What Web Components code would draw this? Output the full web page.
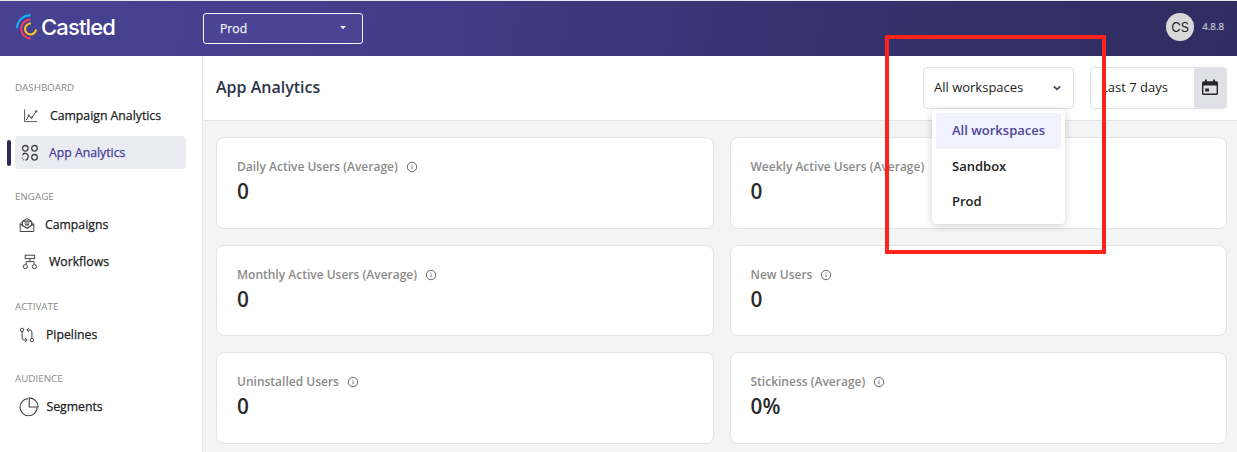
<!DOCTYPE html>
<html lang="en">
<head>
<meta charset="utf-8">
<title>Castled</title>
<style>
html,body{margin:0;height:100%;overflow:hidden}
body{font-family:"Open Sans","Noto Sans",sans-serif;font-size:12px;color:#222;background:#fff}
</style>
</head>
<body>
<castled-app></castled-app>
<script>
const define = (name, html, setup) => {
  const t = document.createElement('template');
  t.innerHTML = html;
  customElements.define(name, class extends HTMLElement {
    connectedCallback() {
      if (this.shadowRoot) return;
      const root = this.attachShadow({mode: 'open'});
      root.append(t.content.cloneNode(true));
      if (setup) setup(this, root);
    }
  });
};

const ICONS = {
  chart: [16, 14, '<path d="M1.6 .5V12.6H14M3.2 11 5.8 6.8 8.6 8.9 13.2 2.2" stroke-width=".9"/><circle cx="5.8" cy="6.6" r=".7"/><circle cx="8.6" cy="8.7" r=".7"/><circle cx="13.2" cy="2.4" r=".8"/>'],
  apps: [18, 18, '<g stroke-width="1.3"><circle cx="4.3" cy="4.3" r="2.8"/><circle cx="13.5" cy="4.3" r="2.8"/><circle cx="13.5" cy="13.3" r="2.8"/><path d="M1.6 11.2A2.9 2.9 0 0 1 7 13.4 2.9 2.9 0 0 1 4.4 16.1M1.5 13.6v.8M2.4 15.6l.5.4"/></g>'],
  mail: [16, 16, '<path d="M3.4 5.2 1.2 7V14.5H14.8V7L12.6 5.2M3.4 8.3V4.3L8 1.6 12.6 4.3V8.3"/><path d="M1.2 7 8 11.3 14.8 7M3.6 4.2H12.4M5.4 6H10.6M6 7.8H10" stroke-width="1.2"/>'],
  flow: [16, 16, '<rect x="3.2" y="1.2" width="9.4" height="3.4"/><path d="M8 4.6V7.6M4.2 10.2V7.6H12V10.2"/><circle cx="3.4" cy="12.6" r="2.1"/><circle cx="12.4" cy="12.6" r="2.1"/>'],
  pipe: [16, 16, '<circle cx="3.1" cy="2.9" r="1.7"/><path d="M3.1 4.6V11Q3.1 13 5 13H8M6 10.8 8.2 13 6 15.2"/><circle cx="12.9" cy="13.1" r="1.7"/><path d="M12.9 11.4V5Q12.9 3 11 3H8M10 .8 7.8 3 10 5.2"/>'],
  pie: [20, 20, '<path d="M8.8 1.6A8.6 8.6 0 1 0 18.2 10.6M10.2 .9V10H19.2A9.1 9.1 0 0 0 10.2 .9Z" stroke-width="1.1"/>'],
  info: [12, 12, '<circle cx="6" cy="6" r="4.7"/><path d="M6 5.6V8.2M6 3.6V4.6"/>'],
  chevron: [10, 8, '<path d="M1.8 2.3 5 5.3 8.2 2.3" stroke-width="1.7"/>'],
  caret: [6, 4, '<path d="M0 0H6L3 3.2Z" fill="currentColor" stroke="none"/>'],
  calendar: [16, 18, '<path fill="currentColor" stroke="none" fill-rule="evenodd" d="M3 .6H4.8V2.2H11.2V.6H13V2.2H14.4Q16 2.2 16 3.8V14.4Q16 16 14.4 16H1.6Q0 16 0 14.4V3.8Q0 2.2 1.6 2.2H3ZM1.4 6.4V14.6H14.6V6.4ZM3.2 9.4H7V12.6H3.2Z"/>'],
};

define('ui-icon', `<style>
:host{display:block;flex:none;line-height:0}
svg{fill:none;stroke:currentColor;stroke-width:1;display:block}
</style><div></div>`, (el, root) => {
  const [w, h, body] = ICONS[el.getAttribute('name')];
  root.querySelector('div').innerHTML = `<svg width="${w}" height="${h}" viewBox="0 0 ${w} ${h}">${body}</svg>`;
});

define('castled-logo', `<style>
:host{display:flex;align-items:center;gap:4px;color:#fff;font:500 22px/26px Inter,sans-serif}
svg{display:block;flex:none}
span{letter-spacing:-.85px}
</style>
<svg width="22" height="26" viewBox="0 0 22 26" fill="none" stroke-width="2.1">
<path d="M2.1 14.3A13 13 0 0 1 15.6 1.4" stroke="#14b5f4"/>
<path d="M15.6 5.5A9.3 9.3 0 0 0 15.6 24.4" stroke="#f73e66"/>
<path d="M15.9 9.5A5.5 5.5 0 1 0 21 15.4" stroke="#fdc51f"/>
</svg><span><slot></slot></span>`);

define('env-select', `<style>
:host{box-sizing:border-box;display:flex;align-items:center;justify-content:space-between;width:160px;height:31px;padding:0 16px;border:1px solid #f4f3fb;border-radius:3px;background:#4a4494;color:#eeeef6;font-size:12.2px;-webkit-text-stroke:.25px currentColor}
</style><span><slot></slot></span><ui-icon name="caret"></ui-icon>`);

define('app-header', `<style>
:host{box-sizing:border-box;display:flex;align-items:center;height:56px;border-top:1px solid #e6e8ec;padding:0 13px 1px 15px;background:linear-gradient(98deg,#464190 0%,#45408e 23%,#34316c 70%,#2f2d61 100%)}
castled-logo{width:188px;margin-top:-2px}
.grow{flex:1}
.avatar{width:28px;height:28px;margin:-2px 8px 0 0;border-radius:50%;background:#d9d9d9;color:#222;display:grid;place-items:center;font:400 13px/1 Inter,sans-serif}
.ver{margin-top:-2px;font-size:9.7px;line-height:12px;color:#c9c9dc;-webkit-text-stroke:.2px currentColor}
</style>
<castled-logo>Castled</castled-logo><env-select>Prod</env-select><div class="grow"></div>
<div class="avatar">CS</div><div class="ver">4.8.8</div>`);

define('nav-section', `<style>
:host{display:block}
h2{margin:0 0 0 15px;height:19px;font-size:9.8px;font-weight:400;line-height:20px;color:#8b8b8b}
</style><h2></h2><slot></slot>`, (el, root) => {
  root.querySelector('h2').textContent = el.getAttribute('label');
});

define('nav-item', `<style>
:host{display:flex;align-items:center;height:37px;color:#222}
.bar{width:4px;height:26px;margin:1px 4px 0 7px;border-radius:2px}
.row{display:flex;align-items:center;width:171px;height:33px;border-radius:4px;font-size:12.25px;line-height:17px;white-space:nowrap;-webkit-text-stroke:.25px currentColor}
.slot{box-sizing:border-box;width:var(--text-x);padding-left:var(--icon-x);display:flex;flex:none;color:#444}
:host([active]) .bar{background:#2c2960}
:host([active]) .row{background:#ebebf4;color:#453f94}
</style><div class="bar"></div><div class="row"><div class="slot"><slot name="icon"></slot></div><slot></slot></div>`);

define('app-sidebar', `<style>
:host{box-sizing:border-box;display:flex;flex-direction:column;width:203px;padding-top:22px;border-right:1px solid #e5e3f9;background:#fff}
nav-section{margin-bottom:16px}
nav-section:nth-of-type(2){margin-bottom:17px}
</style>
<nav-section label="DASHBOARD">
<nav-item style="--icon-x:8px;--text-x:35px"><ui-icon slot="icon" name="chart"></ui-icon>Campaign Analytics</nav-item>
<nav-item active style="--icon-x:6px;--text-x:34px"><ui-icon slot="icon" name="apps"></ui-icon>App Analytics</nav-item>
</nav-section>
<nav-section label="ENGAGE">
<nav-item style="--icon-x:4px;--text-x:30px"><ui-icon slot="icon" name="mail"></ui-icon>Campaigns</nav-item>
<nav-item style="--icon-x:7px;--text-x:34px"><ui-icon slot="icon" name="flow"></ui-icon>Workflows</nav-item>
</nav-section>
<nav-section label="ACTIVATE">
<nav-item style="--icon-x:4px;--text-x:31px"><ui-icon slot="icon" name="pipe"></ui-icon>Pipelines</nav-item>
</nav-section>
<nav-section label="AUDIENCE">
<nav-item style="--icon-x:4px;--text-x:31.5px"><ui-icon slot="icon" name="pie"></ui-icon>Segments</nav-item>
</nav-section>`);

define('workspace-select', `<style>
:host{position:relative;box-sizing:border-box;display:flex;align-items:center;justify-content:space-between;width:151px;height:42px;padding:0 11px 0 10px;border:1px solid #dfdfe6;border-radius:4px;background:#fff;font-size:13px;color:#222}
span{padding-bottom:2px}
.chev{color:#3c4868}
.menu{position:absolute;z-index:2;left:8px;top:41px;box-sizing:border-box;width:133px;height:115px;padding:4px;border-radius:4px;background:#fff;box-shadow:0 2px 8px rgba(0,0,0,.18);font-size:13px;font-weight:600}
.opt{box-sizing:border-box;height:35.5px;line-height:35px;padding-left:16px;border-radius:2px}
.on{background:#f2f1fe;color:#4d4799}
</style><span>All workspaces</span><ui-icon class="chev" name="chevron"></ui-icon>
<div class="menu"><div class="opt on">All workspaces</div><div class="opt">Sandbox</div><div class="opt">Prod</div></div>`);

define('date-range', `<style>
:host{box-sizing:border-box;display:flex;width:137px;height:42px;border:1px solid #dfdfe6;border-radius:4px;overflow:hidden;background:#fff;font-size:13px;line-height:38px;color:#222}
span{width:103px;box-sizing:border-box;padding-left:10px}
.cal{flex:1;display:grid;place-items:center;background:#e0e0e7;color:#26262b}
</style><span>Last 7 days</span><div class="cal"><ui-icon name="calendar"></ui-icon></div>`);

define('page-bar', `<style>
:host{box-sizing:border-box;display:flex;align-items:center;height:65px;padding:0 10px 0 13px;border-bottom:1px solid #e2e2e4;background:#fff}
h1{flex:1;margin:0;font-size:16px;font-weight:600;color:#2c3548;line-height:22px;padding-bottom:2px}
date-range{margin-left:16px}
</style><h1>App Analytics</h1><workspace-select></workspace-select><date-range></date-range>`);

define('stat-card', `<style>
:host{box-sizing:border-box;display:block;border:1px solid #e4e4e6;border-radius:8px;padding:20px;background:#fff}
.label{display:flex;align-items:center;gap:8px;height:17px;line-height:17px;font-weight:600;color:#8b8b8b}
ui-icon{color:#666}
.value{font-size:20.8px;font-weight:600;line-height:26px;margin-top:3px;color:#2a2a2a}
</style><div class="label"><span></span><ui-icon name="info"></ui-icon></div><div class="value"><slot></slot></div>`, (el, root) => {
  root.querySelector('.label span').textContent = el.getAttribute('label');
});

define('stat-grid', `<style>
:host{display:grid;grid-template-columns:498px 497px;grid-template-rows:92px 91px 92px;gap:16px;padding:16px 10px 0 13px}
stat-card:nth-of-type(even){padding-left:19.5px}
</style>
<stat-card label="Daily Active Users (Average)">0</stat-card>
<stat-card label="Weekly Active Users (Average)">0</stat-card>
<stat-card label="Monthly Active Users (Average)">0</stat-card>
<stat-card label="New Users">0</stat-card>
<stat-card label="Uninstalled Users">0</stat-card>
<stat-card label="Stickiness (Average)">0%</stat-card>`);

define('highlight-frame', `<style>
:host{position:absolute;z-index:5;left:885px;top:35px;box-sizing:border-box;width:221px;height:219px;border:4px solid #ff2419;pointer-events:none}
</style>`);

define('castled-app', `<style>
:host{position:relative;display:flex;flex-direction:column;height:452px;overflow:hidden}
app-header{flex:none}
.body{flex:1;display:flex;min-height:0}
app-sidebar{flex:none}
main{flex:1;min-width:0;background:#f4f4f4}
</style>
<app-header></app-header>
<div class="body"><app-sidebar></app-sidebar><main><page-bar></page-bar><stat-grid></stat-grid></main></div>
<highlight-frame></highlight-frame>`);
</script>
</body>
</html>
